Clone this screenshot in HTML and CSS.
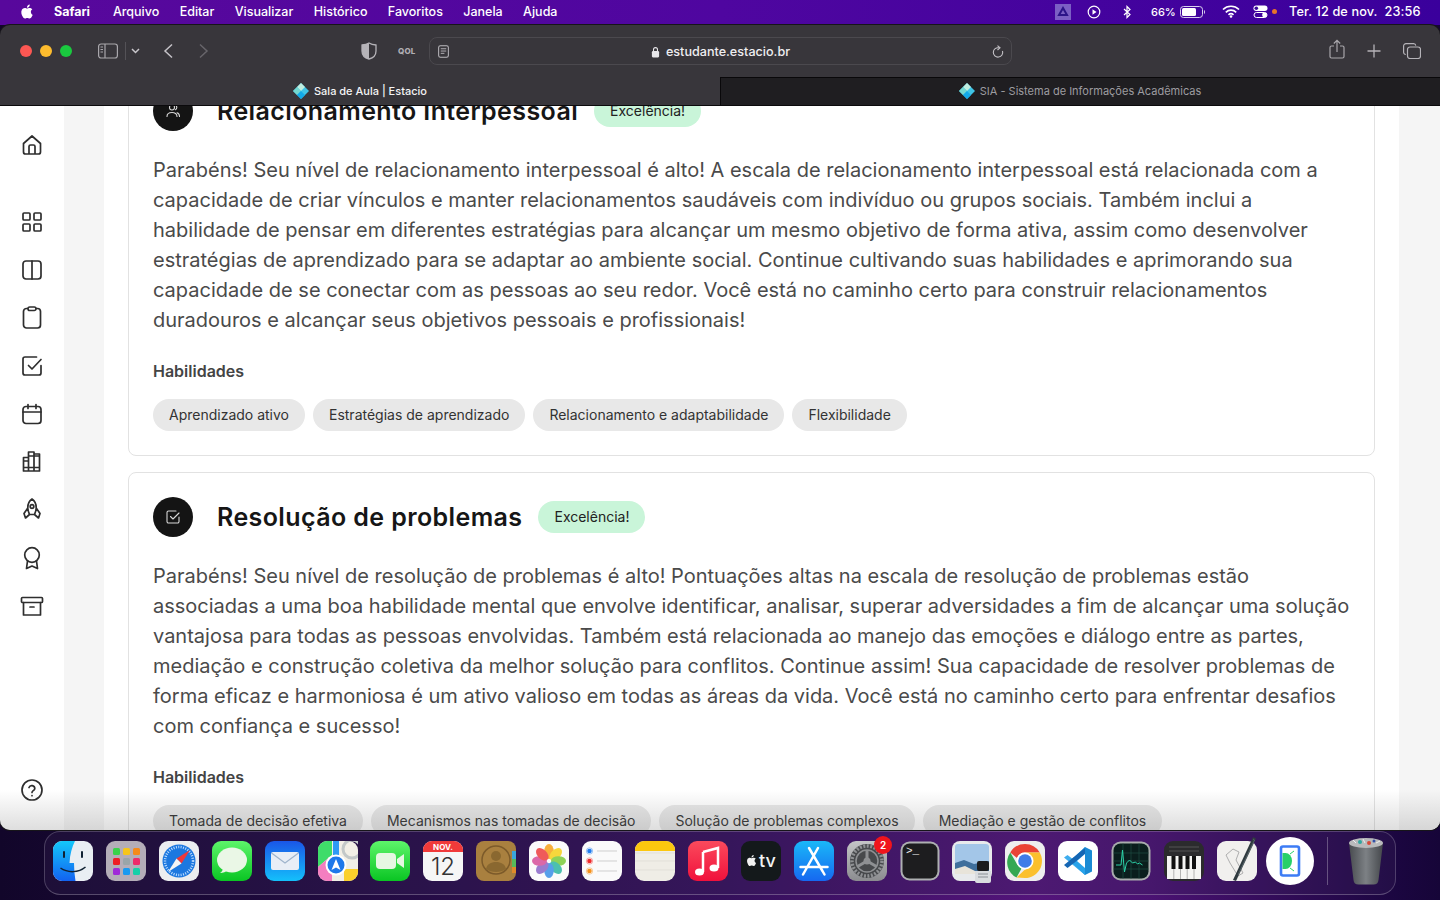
FILE: index.html
```html
<!DOCTYPE html>
<html lang="pt-BR">
<head>
<meta charset="utf-8">
<title>Sala de Aula | Estacio</title>
<link rel="stylesheet" href="styles.css">
</head>
<body>
<header class="menubar">
  <svg class="apple" viewBox="0 0 24 24"><path fill="#fff" d="M12.152 6.896c-.948 0-2.415-1.078-3.96-1.04-2.04.027-3.91 1.183-4.961 3.014-2.117 3.675-.546 9.103 1.519 12.09 1.013 1.454 2.208 3.09 3.792 3.039 1.52-.065 2.09-.987 3.935-.987 1.831 0 2.35.987 3.96.948 1.637-.026 2.676-1.48 3.676-2.948 1.156-1.688 1.636-3.325 1.662-3.415-.039-.013-3.182-1.221-3.22-4.857-.026-3.04 2.48-4.494 2.597-4.559-1.429-2.09-3.623-2.324-4.39-2.376-2-.156-3.675 1.09-4.61 1.09zM15.53 3.83c.843-1.012 1.4-2.427 1.245-3.83-1.207.052-2.662.805-3.532 1.818-.78.896-1.454 2.338-1.273 3.714 1.338.104 2.715-.688 3.559-1.701"/></svg>
  <nav class="menu">
    <span class="menu-app">Safari</span><span>Arquivo</span><span>Editar</span><span>Visualizar</span><span>Histórico</span><span>Favoritos</span><span>Janela</span><span>Ajuda</span>
  </nav>
  <div class="status">
    <svg class="st-drive" viewBox="0 0 16 16"><rect width="16" height="16" fill="#7b5fc4"/><path d="M8 4l4 7H4z" fill="none" stroke="#2c1488" stroke-width="2"/></svg>
    <svg class="st-play" viewBox="0 0 14 14"><circle cx="7" cy="7" r="5.8" fill="none" stroke="#fff" stroke-width="1.2"/><path d="M5.5 4.3l4 2.7-4 2.7z" fill="#fff"/></svg>
    <svg class="st-bt" viewBox="0 0 10 14"><path d="M2 4l6 5.5L5 12.5V1.5L8 4.5 2 10" fill="none" stroke="#fff" stroke-width="1.2"/></svg>
    <span class="st-pct">66%</span>
    <svg class="st-batt" viewBox="0 0 26 12"><rect x=".5" y=".5" width="22" height="11" rx="3" fill="none" stroke="#d8d0ee"/><rect x="2" y="2" width="14" height="8" rx="1.5" fill="#fff"/><path d="M24 4v4a2 2 0 0 0 1-2 2 2 0 0 0-1-2" fill="#d8d0ee"/></svg>
    <svg class="st-wifi" viewBox="0 0 18 13"><path d="M1 4.500a11.500 11.500 0 0 1 16 0M3.800 7.300a7.500 7.500 0 0 1 10.400 0M6.500 9.800a3.600 3.600 0 0 1 5 0" fill="none" stroke="#fff" stroke-width="1.7"/><circle cx="9" cy="11.5" r="1.3" fill="#fff"/></svg>
    <svg class="st-ctrl" viewBox="0 0 15 13"><rect x=".5" y=".5" width="14" height="5.5" rx="2.7" fill="#fff"/><circle cx="3.3" cy="3.2" r="1.8" fill="#3a0a9c"/><rect x="1" y="7.5" width="13" height="5" rx="2.5" fill="none" stroke="#fff"/><circle cx="11.5" cy="10" r="2.4" fill="#fff"/></svg>
    <i class="st-dot"></i>
    <span class="st-date">Ter. 12 de nov.&nbsp; 23:56</span>
  </div>
</header>

<div class="window">
  <div class="toolbar">
    <div class="lights"><i class="light red"></i><i class="light yellow"></i><i class="light green"></i></div>
    <svg class="tb tb-side" viewBox="0 0 20 16"><rect x=".6" y="1" width="18.8" height="14" rx="2.5" fill="none" stroke="#a9a7ac" stroke-width="1.2"/><path d="M7 1v14" stroke="#a9a7ac" stroke-width="1.2"/><path d="M2.5 4h2.500M2.500 6.500h2.500M2.500 9h2.500" stroke="#a9a7ac"/></svg>
    <i class="tb-sep"></i>
    <svg class="tb tb-chev" viewBox="0 0 9 6"><path d="M1 1l3.500 3.500L8 1" fill="none" stroke="#c9c7cc" stroke-width="1.5"/></svg>
    <svg class="tb tb-back" viewBox="0 0 11 16"><path d="M9 1.500L2 8l7 6.500" fill="none" stroke="#c4c2c7" stroke-width="1.5"/></svg>
    <svg class="tb tb-fwd" viewBox="0 0 11 16"><path d="M2 1.500L9 8l-7 6.500" fill="none" stroke="#67656a" stroke-width="1.5"/></svg>
    <svg class="tb tb-shield" viewBox="0 0 16 18"><path d="M8 1c2 1.200 4.500 1.800 7 2v6c0 4-3 7-7 8-4-1-7-4-7-8V3c2.500-.2 5-.8 7-2z" fill="none" stroke="#b5b3b8" stroke-width="1.3"/><path d="M8 1c-2 1.200-4.500 1.800-7 2v6c0 4 3 7 7 8z" fill="#b5b3b8"/></svg>
    <span class="tb-qol">QOL</span>
    <div class="urlbar">
      <svg class="url-reader" viewBox="0 0 12 14"><rect x=".7" y=".7" width="10.6" height="12.6" rx="2" fill="none" stroke="#bcbabf" stroke-width="1.1"/><path d="M3 4h6M3 6.500h6M3 9h4" stroke="#bcbabf"/></svg>
      <div class="url-text">
        <svg class="url-lock" viewBox="0 0 10 13"><rect x="1" y="5.5" width="8" height="7" rx="1.2" fill="#e8e7ea"/><path d="M2.800 6V3.800a2.200 2.200 0 0 1 4.400 0V6" fill="none" stroke="#e8e7ea" stroke-width="1.2"/></svg>
        <span>estudante.estacio.br</span>
      </div>
      <svg class="url-reload" viewBox="0 0 12 14"><path d="M7 2.800A4.700 4.700 0 1 0 10.500 6" fill="none" stroke="#c4c2c7" stroke-width="1.1"/><path d="M5.500.700L8 2.800 5.500 5" fill="none" stroke="#c4c2c7" stroke-width="1.1"/></svg>
    </div>
    <svg class="tb tb-share" viewBox="0 0 16 20"><path d="M5 7H2.500A1.500 1.500 0 0 0 1 8.500v9A1.500 1.500 0 0 0 2.500 19h11a1.500 1.500 0 0 0 1.500-1.500v-9A1.500 1.500 0 0 0 13.500 7H11M8 13V1.500M4.800 4.500L8 1.300l3.200 3.200" fill="none" stroke="#a9a7ac" stroke-width="1.2"/></svg>
    <svg class="tb tb-plus" viewBox="0 0 14 14"><path d="M7 .5v13M.5 7h13" stroke="#b5b3b8" stroke-width="1.3"/></svg>
    <svg class="tb tb-tabs" viewBox="0 0 18 16"><rect x="4.500" y="4" width="13" height="11.5" rx="2.5" fill="none" stroke="#b5b3b8" stroke-width="1.2"/><path d="M2.800 11.500A2.200 2.200 0 0 1 .6 9.300V3A2.400 2.400 0 0 1 3 .6h7.500a2.300 2.300 0 0 1 2.300 2" fill="none" stroke="#b5b3b8" stroke-width="1.2"/></svg>
  </div>
  <div class="tabs">
    <div class="tab tab-on">
      <svg class="favicon" viewBox="0 0 16 16"><path d="M8 0l8 8-8 8-8-8z" fill="#3fc4e6"/><path d="M8 0l4 4-4 4-4-4z" fill="#bfeee0"/><path d="M0 8l4-4 4 4-4 4z" fill="#74d8d0"/><path d="M8 8l4 4-4 4-4-4z" fill="#12a9e8"/></svg>
      <span>Sala de Aula | Estacio</span>
    </div>
    <div class="tab tab-off">
      <svg class="favicon" viewBox="0 0 16 16"><path d="M8 0l8 8-8 8-8-8z" fill="#3fc4e6"/><path d="M8 0l4 4-4 4-4-4z" fill="#bfeee0"/><path d="M0 8l4-4 4 4-4 4z" fill="#74d8d0"/><path d="M8 8l4 4-4 4-4-4z" fill="#12a9e8"/></svg>
      <span>SIA - Sistema de Informações Acadêmicas</span>
    </div>
  </div>
  <div class="page">
    <aside class="sidebar">
      <svg class="side-ic side-home" viewBox="0 0 24 24"><path d="M3.500 10.500L12 3l8.500 7.500V19a2 2 0 0 1-2 2h-13a2 2 0 0 1-2-2zM9 21v-7.500A1.500 1.500 0 0 1 10.500 12h3a1.500 1.500 0 0 1 1.500 1.500V21"/></svg>
      <svg class="side-ic" viewBox="0 0 24 24"><rect x="3" y="3" width="7" height="7" rx="1"/><rect x="14" y="3" width="7" height="7" rx="1"/><rect x="3" y="14" width="7" height="7" rx="1"/><rect x="14" y="14" width="7" height="7" rx="1"/></svg>
      <svg class="side-ic" viewBox="0 0 24 24"><rect x="3" y="3" width="18" height="18" rx="3"/><path d="M12 3v18"/></svg>
      <svg class="side-ic" viewBox="0 0 24 24"><rect x="3.500" y="2.500" width="17" height="19.5" rx="3"/><rect x="8" y="1" width="8" height="3.5" rx="1.7" class="fill-w"/></svg>
      <svg class="side-ic" viewBox="0 0 24 24"><path d="M21 11.500V19a2 2 0 0 1-2 2H5a2 2 0 0 1-2-2V5a2 2 0 0 1 2-2h11.500M8.500 11.500l3.500 3.500 9-9.500"/></svg>
      <svg class="side-ic" viewBox="0 0 24 24"><rect x="3" y="4.500" width="18" height="17" rx="3"/><path d="M3 10h18M8 2.500v4M16 2.500v4"/></svg>
      <svg class="side-ic" viewBox="0 0 24 24"><path d="M3.500 7.500h5V21h-5zM8.500 2h5.500v19H8.500zM14 4h5.500v17H14zM3.500 17.500h16M8.500 6h11M3.500 11h5"/></svg>
      <svg class="side-ic" viewBox="0 0 24 24"><path d="M12 1c2.800 2 4.200 5 4.200 8.500 0 2.700-.7 5-1.700 7h-5c-1-2-1.700-4.300-1.700-7C7.800 6 9.200 3 12 1zM7.800 10L4 15.500 5.500 20l4-3.500M16.200 10l3.800 5.500-1.500 4.500-4-3.500"/><circle cx="12" cy="8.500" r="1.800"/></svg>
      <svg class="side-ic" viewBox="0 0 24 24"><circle cx="12" cy="9" r="7.300"/><path d="M7.500 15l-1 7.500L12 20l5.500 2.500-1-7.500"/></svg>
      <svg class="side-ic" viewBox="0 0 24 24"><rect x="1.500" y="3.500" width="21" height="5" rx="1"/><path d="M3.500 8.500V21h17V8.500M10 13h4"/></svg>
      <svg class="side-ic side-help" viewBox="0 0 24 24"><circle cx="12" cy="12" r="10"/><path d="M9 9.500a3 3 0 0 1 5.800 1c0 2-2.800 2.300-2.800 3.900M12 17.500v.2"/></svg>
    </aside>
    <div class="gutter"></div>
    <main class="main">
      <section class="card card-first">
        <div class="card-head">
          <span class="avatar">
            <svg viewBox="0 0 16 16"><circle cx="7" cy="4.500" r="2.500"/><path d="M2 13.500c0-2.800 2.200-4 5-4s5 1.200 5 4M10.500 2.300a2.500 2.500 0 0 1 0 4.400M12 9.800c1.500.5 2.500 1.700 2.500 3.700"/></svg>
          </span>
          <h2 class="card-title">Relacionamento Interpessoal</h2>
          <span class="badge">Excelência!</span>
        </div>
        <p class="card-text">Parabéns! Seu nível de relacionamento interpessoal é alto! A escala de relacionamento interpessoal está relacionada com a capacidade de criar vínculos e manter relacionamentos saudáveis com indivíduo ou grupos sociais. Também inclui a habilidade de pensar em diferentes estratégias para alcançar um mesmo objetivo de forma ativa, assim como desenvolver estratégias de aprendizado para se adaptar ao ambiente social. Continue cultivando suas habilidades e aprimorando sua capacidade de se conectar com as pessoas ao seu redor. Você está no caminho certo para construir relacionamentos duradouros e alcançar seus objetivos pessoais e profissionais!</p>
        <h3 class="skills-title">Habilidades</h3>
        <div class="chips"><span class="chip">Aprendizado ativo</span><span class="chip">Estratégias de aprendizado</span><span class="chip">Relacionamento e adaptabilidade</span><span class="chip">Flexibilidade</span></div>
      </section>
      <section class="card">
        <div class="card-head">
          <span class="avatar">
            <svg viewBox="0 0 16 16"><path d="M14 8v4.500a1.500 1.500 0 0 1-1.500 1.500h-9A1.500 1.500 0 0 1 2 12.500v-9A1.500 1.500 0 0 1 3.500 2H11M5.500 7.500L8 10l6-6"/></svg>
          </span>
          <h2 class="card-title">Resolução de problemas</h2>
          <span class="badge">Excelência!</span>
        </div>
        <p class="card-text">Parabéns! Seu nível de resolução de problemas é alto! Pontuações altas na escala de resolução de problemas estão associadas a uma boa habilidade mental que envolve identificar, analisar, superar adversidades a fim de alcançar uma solução vantajosa para todas as pessoas envolvidas. Também está relacionada ao manejo das emoções e diálogo entre as partes, mediação e construção coletiva da melhor solução para conflitos. Continue assim! Sua capacidade de resolver problemas de forma eficaz e harmoniosa é um ativo valioso em todas as áreas da vida. Você está no caminho certo para enfrentar desafios com confiança e sucesso!</p>
        <h3 class="skills-title">Habilidades</h3>
        <div class="chips"><span class="chip">Tomada de decisão efetiva</span><span class="chip">Mecanismos nas tomadas de decisão</span><span class="chip">Solução de problemas complexos</span><span class="chip">Mediação e gestão de conflitos</span></div>
      </section>
    </main>
    <div class="gutter-r"></div>
    <div class="page-fade"></div>
  </div>
</div>

<footer class="dock">
  <svg class="app" viewBox="0 0 40 40"><defs><linearGradient id="fa" x1="0" y1="0" x2="0" y2="1"><stop offset="0" stop-color="#14c8fb"/><stop offset="1" stop-color="#1262f0"/></linearGradient></defs><rect width="40" height="40" rx="9" fill="#e9eef3"/><path d="M9 0h13c-3 6-5 13-5.500 22H21c0 6 .5 12 1.500 18H9a9 9 0 0 1-9-9V9a9 9 0 0 1 9-9z" fill="url(#fa)"/><path d="M11 11v5M29 11v5" stroke="#123" stroke-width="2" stroke-linecap="round"/><path d="M7.500 27c7 5 18 5 25-1" fill="none" stroke="#123" stroke-width="1.5"/></svg>
  <svg class="app" viewBox="0 0 40 40"><rect width="40" height="40" rx="9" fill="#b4adb8"/><g><rect x="7" y="7" width="7" height="7" rx="1.5" fill="#39d24a"/><rect x="17" y="7" width="7" height="7" rx="1.5" fill="#f7c51b"/><rect x="27" y="7" width="7" height="7" rx="1.5" fill="#f58a1a"/><rect x="7" y="17" width="7" height="7" rx="1.5" fill="#ee1c25"/><rect x="17" y="17" width="7" height="7" rx="1.5" fill="#9aa5a9"/><rect x="27" y="17" width="7" height="7" rx="1.5" fill="#ee2a6a"/><rect x="7" y="27" width="7" height="7" rx="1.5" fill="#a02ad8"/><rect x="17" y="27" width="7" height="7" rx="1.5" fill="#1a9af0"/><rect x="27" y="27" width="7" height="7" rx="1.5" fill="#16cfa8"/></g></svg>
  <svg class="app" viewBox="0 0 40 40"><rect width="40" height="40" rx="9" fill="#eceef0"/><circle cx="20" cy="20" r="16.5" fill="#1c78e0"/><circle cx="20" cy="20" r="14" fill="none" stroke="#bcdcff" stroke-width="2.5" stroke-dasharray="1 1.4"/><path d="M31 9L17.500 17.500 22.500 22.500z" fill="#f0383a"/><path d="M9 31L17.500 17.500 22.500 22.500z" fill="#f4f4f4"/></svg>
  <svg class="app" viewBox="0 0 40 40"><defs><linearGradient id="ms" x1="0" y1="0" x2="0" y2="1"><stop offset="0" stop-color="#5df56a"/><stop offset="1" stop-color="#0ac523"/></linearGradient></defs><rect width="40" height="40" rx="9" fill="url(#ms)"/><ellipse cx="20" cy="19" rx="15" ry="12.5" fill="#eaf7e6"/><path d="M11 26c0 3-1 5-3 6 3 0 6-1 8-3z" fill="#eaf7e6"/></svg>
  <svg class="app" viewBox="0 0 40 40"><defs><linearGradient id="ml" x1="0" y1="0" x2="0" y2="1"><stop offset="0" stop-color="#1a56e8"/><stop offset="1" stop-color="#14c0fb"/></linearGradient></defs><rect width="40" height="40" rx="9" fill="url(#ml)"/><rect x="6" y="11" width="28" height="18" rx="2" fill="#e8eef6"/><path d="M6.500 12L20 22l13.500-10" fill="none" stroke="#9fb4cc" stroke-width="1.2"/></svg>
  <svg class="app" viewBox="0 0 40 40"><rect width="40" height="40" rx="9" fill="#f2efe6"/><path d="M0 9a9 9 0 0 1 9-9h5v14L0 26z" fill="#3fdc6a"/><path d="M0 26l14-12v26H9a9 9 0 0 1-9-9z" fill="#f47ec0"/><path d="M26 28h14v3a9 9 0 0 1-9 9h-5z" fill="#fbd02b"/><circle cx="34" cy="8" r="9" fill="none" stroke="#c3c8c8" stroke-width="3"/><path d="M15 0h6v16h-6z" fill="#2f9af5"/><circle cx="18" cy="24" r="10.5" fill="#fff"/><circle cx="18" cy="24" r="8.5" fill="#1f78ea"/><path d="M18 18l4.500 11-4.500-2.500L13.500 29z" fill="#fff"/></svg>
  <svg class="app" viewBox="0 0 40 40"><defs><linearGradient id="ft" x1="0" y1="0" x2="0" y2="1"><stop offset="0" stop-color="#5df56a"/><stop offset="1" stop-color="#0ac523"/></linearGradient></defs><rect width="40" height="40" rx="9" fill="url(#ft)"/><rect x="6" y="12" width="20" height="16" rx="4" fill="#e5f7e2"/><path d="M27 18l7-5v14l-7-5z" fill="#e5f7e2"/></svg>
  <svg class="app" viewBox="0 0 40 40"><rect width="40" height="40" rx="9" fill="#f6f6f6"/><path d="M0 11V9a9 9 0 0 1 9-9h22a9 9 0 0 1 9 9v2z" fill="#f13a3a"/><text x="20" y="9" class="cal-m">NOV.</text><text x="20" y="34" class="cal-d">12</text></svg>
  <svg class="app" viewBox="0 0 40 40"><rect width="40" height="40" rx="8" fill="#a9803f"/><rect x="36" y="10" width="4" height="8" fill="#3aa6dc"/><rect x="36" y="18" width="4" height="8" fill="#58b95a"/><rect x="36" y="26" width="4" height="6" fill="#e08a2a"/><circle cx="20" cy="19" r="14" fill="none" stroke="#7c5a2a" stroke-width="1.5"/><circle cx="20" cy="15" r="5" fill="#8a6830"/><path d="M10 28c1-5 5-7 10-7s9 2 10 7c-5 4-15 4-20 0z" fill="#8a6830"/></svg>
  <svg class="app" viewBox="0 0 40 40"><rect width="40" height="40" rx="9" fill="#fbfbfb"/><g opacity=".85"><ellipse cx="20" cy="10.500" rx="4.800" ry="7.500" fill="#f7a21b"/><ellipse cx="20" cy="10.500" rx="4.800" ry="7.500" fill="#f7d11b" transform="rotate(45 20 20)"/><ellipse cx="20" cy="10.500" rx="4.800" ry="7.500" fill="#7ccb3c" transform="rotate(90 20 20)"/><ellipse cx="20" cy="10.500" rx="4.800" ry="7.500" fill="#2eb6a2" transform="rotate(135 20 20)"/><ellipse cx="20" cy="10.500" rx="4.800" ry="7.500" fill="#3a8fe8" transform="rotate(180 20 20)"/><ellipse cx="20" cy="10.500" rx="4.800" ry="7.500" fill="#8a66c8" transform="rotate(225 20 20)"/><ellipse cx="20" cy="10.500" rx="4.800" ry="7.500" fill="#d64f9a" transform="rotate(270 20 20)"/><ellipse cx="20" cy="10.500" rx="4.800" ry="7.500" fill="#ee3f3f" transform="rotate(315 20 20)"/></g></svg>
  <svg class="app" viewBox="0 0 40 40"><rect width="40" height="40" rx="9" fill="#fafafa"/><circle cx="7.500" cy="10" r="3.200" fill="none" stroke="#9cc4f6"/><circle cx="7.500" cy="10" r="2.300" fill="#1f7cf0"/><circle cx="7.500" cy="20" r="3.200" fill="none" stroke="#f6a8a8"/><circle cx="7.500" cy="20" r="2.300" fill="#f0282a"/><circle cx="7.500" cy="30" r="3.200" fill="none" stroke="#f8cc9a"/><circle cx="7.500" cy="30" r="2.300" fill="#f7911a"/><path d="M15 10h20M15 20h20M15 30h20" stroke="#cfcfcf" stroke-width="1"/></svg>
  <svg class="app" viewBox="0 0 40 40"><rect width="40" height="40" rx="9" fill="#efede6"/><path d="M0 10V9a9 9 0 0 1 9-9h22a9 9 0 0 1 9 9v1z" fill="#fcc70f"/><path d="M0 12h40M0 20h40M0 29h40" stroke="#dedbd2" stroke-width=".7"/></svg>
  <svg class="app" viewBox="0 0 40 40"><defs><linearGradient id="mu" x1="0" y1="0" x2="0" y2="1"><stop offset="0" stop-color="#fb4a5c"/><stop offset="1" stop-color="#f0113c"/></linearGradient></defs><rect width="40" height="40" rx="9" fill="url(#mu)"/><path d="M15 11l15-4v20" fill="none" stroke="#fff" stroke-width="2.5"/><path d="M15 11v20" stroke="#fff" stroke-width="2.5"/><ellipse cx="11.500" cy="31" rx="4.500" ry="3.500" fill="#fff"/><ellipse cx="26" cy="27" rx="4.500" ry="3.500" fill="#fff"/></svg>
  <svg class="app" viewBox="0 0 40 40"><rect width="40" height="40" rx="9" fill="#14191b"/><g transform="translate(5 14) scale(.46)"><path fill="#f2f2f2" d="M12.152 6.896c-.948 0-2.415-1.078-3.96-1.04-2.04.027-3.91 1.183-4.961 3.014-2.117 3.675-.546 9.103 1.519 12.09 1.013 1.454 2.208 3.09 3.792 3.039 1.52-.065 2.09-.987 3.935-.987 1.831 0 2.35.987 3.96.948 1.637-.026 2.676-1.48 3.676-2.948 1.156-1.688 1.636-3.325 1.662-3.415-.039-.013-3.182-1.221-3.22-4.857-.026-3.04 2.48-4.494 2.597-4.559-1.429-2.09-3.623-2.324-4.39-2.376-2-.156-3.675 1.09-4.61 1.09zM15.53 3.83c.843-1.012 1.4-2.427 1.245-3.83-1.207.052-2.662.805-3.532 1.818-.78.896-1.454 2.338-1.273 3.714 1.338.104 2.715-.688 3.559-1.701"/></g><text x="18" y="26" class="tv-t">tv</text></svg>
  <svg class="app" viewBox="0 0 40 40"><defs><linearGradient id="as" x1="0" y1="0" x2="0" y2="1"><stop offset="0" stop-color="#1ab8f8"/><stop offset="1" stop-color="#1668f0"/></linearGradient></defs><rect width="40" height="40" rx="9" fill="url(#as)"/><path d="M15 7l13.500 23M24 7L11 30M6.500 26h27M11 30l-2 3.500M28.500 30l2 3.500" stroke="#fff" stroke-width="2.5" stroke-linecap="round" fill="none"/></svg>
  <svg class="app" viewBox="0 0 40 40"><defs><linearGradient id="sg" x1="0" y1="0" x2="0" y2="1"><stop offset="0" stop-color="#c4c5c7"/><stop offset="1" stop-color="#8b8c8f"/></linearGradient></defs><rect width="40" height="40" rx="9" fill="url(#sg)"/><circle cx="20" cy="20" r="17" fill="#47494c"/><circle cx="20" cy="20" r="15" fill="none" stroke="#8e9093" stroke-width="3.5" stroke-dasharray="2 1.5"/><circle cx="20" cy="20" r="11" fill="none" stroke="#8e9093" stroke-width="1.5"/><path d="M20 20V9M20 20l9.500 5.500M20 20l-9.500 5.500" stroke="#8e9093" stroke-width="3"/><circle cx="20" cy="20" r="3.500" fill="#8e9093"/></svg>
  <svg class="app" viewBox="0 0 40 40"><rect x=".5" y=".5" width="39" height="39" rx="9" fill="#aeb0b2"/><rect x="2.500" y="2.500" width="35" height="35" rx="7" fill="#1d1d1f"/><text x="6" y="13" class="term">&gt;_</text></svg>
  <svg class="app app-over" viewBox="0 0 40 40"><rect width="40" height="40" rx="8" fill="#e8eaec"/><rect x="3" y="3" width="34" height="30" rx="3" fill="#a3c6e8"/><path d="M3 22l9-3 10 4 15-3v13H3z" fill="#3f6f9c"/><path d="M3 28l10-3 10 5v3H3z" fill="#e8e4da"/><path d="M23 30h16v10a2 2 0 0 1-2 2H25a2 2 0 0 1-2-2z" fill="#d9dcdf"/><path d="M26 33l10 0M26 36h10" stroke="#8a9096"/><rect x="25" y="20" width="12" height="10" rx="2" fill="#1b1b1d"/></svg>
  <svg class="app" viewBox="0 0 40 40"><rect width="40" height="40" rx="9" fill="#eeeeee"/><path d="M20 3A17 17 0 0 1 34.700 11.500H20a8.500 8.500 0 0 0-8 5.500L5.300 11.500A17 17 0 0 1 20 3z" fill="#ea4335"/><path d="M5.300 11.500L12.500 24l4 3.500-5 9A17 17 0 0 1 5.300 11.500z" fill="#34a853"/><path d="M34.700 11.500A17 17 0 0 1 20 37l-8.500-.5 8.500-8a8.500 8.500 0 0 0 7-8.500 8.500 8.500 0 0 0-7-8.500z" fill="#fbc02d"/><circle cx="20" cy="20" r="8.500" fill="#fff"/><circle cx="20" cy="20" r="6.800" fill="#3f7ce8"/></svg>
  <svg class="app" viewBox="0 0 40 40"><rect width="40" height="40" rx="9" fill="#fff"/><path d="M27 6l7 3.500v21L27 34 12 20z" fill="#1a8ad4"/><path d="M27 6v28L6 16.500 9.500 14l6.500 5z" fill="#2aa4ec" opacity=".9"/><path d="M27 13L16 22l-6.500 5L6 24l21-17z" fill="#1566b4"/><path d="M27 13v14l-8-7z" fill="#fff"/></svg>
  <svg class="app" viewBox="0 0 40 40"><rect x=".5" y=".5" width="39" height="39" rx="9" fill="#a9acad"/><rect x="2.500" y="2.500" width="35" height="35" rx="7" fill="#0a1e1d"/><path d="M2.500 12h35M2.500 20h35M2.500 28h35M12 2.500v35M20 2.500v35M28 2.500v35" stroke="#1d4a44" stroke-width=".7"/><path d="M5 24h5l1.500-15 2 22 2-9 3-3 3 3 3-1 2 2 2-1 3 2" fill="none" stroke="#2cd2a8" stroke-width="1"/></svg>
  <svg class="app" viewBox="0 0 40 40"><rect width="40" height="40" rx="9" fill="#2b2b2d"/><rect x="3" y="15" width="34" height="23" fill="#f5f5f3"/><path d="M9.800 15v23M16.500 15v23M23.200 15v23M30 15v23" stroke="#888" stroke-width=".6"/><path d="M7.500 15h4v13h-4zM14.500 15h4v13h-4zM21.500 15h4v13h-4zM28 15h4v13h-4z" fill="#111"/><path d="M5 6h30M5 10h30" stroke="#555" stroke-width="1"/></svg>
  <svg class="app app-over" viewBox="0 0 40 40"><rect width="40" height="40" rx="9" fill="#f1f0ee"/><path d="M9 14l7-6 6 3-3 8 7 13-5 3-8-13z" fill="none" stroke="#aeaeae" stroke-width="1"/><path d="M36 -4l3 1.500L19 40l-3-1z" fill="#2f3a3f"/><path d="M36 -2l1.500 1L21 34" stroke="#6d7a80" stroke-width=".6" fill="none"/></svg>
  <svg class="app app-android" viewBox="0 0 48 48"><circle cx="24" cy="24" r="24" fill="#fff"/><rect x="15" y="9.500" width="18" height="29" rx="2" fill="#fff" stroke="#3d7cf5" stroke-width="2.6"/><path d="M16.500 16h3a6.500 8 0 0 1 6.500 8 6.500 8 0 0 1-6.500 8h-3z" fill="#28d068"/><path d="M24 17l4-3M24 31l4 3" stroke="#28d068" stroke-width="1"/></svg>
  <i class="dock-sep"></i>
  <svg class="trash" viewBox="0 0 36 48"><defs><linearGradient id="tr" x1="0" y1="0" x2="1" y2="0"><stop offset="0" stop-color="#484b4f"/><stop offset=".5" stop-color="#7d8185"/><stop offset="1" stop-color="#44474b"/></linearGradient></defs><path d="M1 6h34l-4.500 37a5 5 0 0 1-5 4.500h-15a5 5 0 0 1-5-4.500z" fill="url(#tr)"/><ellipse cx="18" cy="6" rx="17" ry="5" fill="#b9babc"/><circle cx="12" cy="5" r="2" fill="#2fa6a0"/><circle cx="21" cy="6" r="2" fill="#d8483a"/><circle cx="26" cy="4" r="1.5" fill="#3350a8"/><path d="M5 3l3 3M15 2l2 4M28 6l4-2" stroke="#eee"/></svg>
  <span class="calendar-badge">2</span>
</footer>
</body>
</html>
```

FILE: styles.css
```css
* { box-sizing: border-box; }
html, body { margin: 0; height: 100%; }
body {
  width: 1440px;
  height: 900px;
  overflow: hidden;
  position: relative;
  display: flex;
  flex-direction: column;
  font-family: "Inter", "Liberation Sans", sans-serif;
  background: linear-gradient(90deg, #12062a 0%, #1e0a3c 20%, #34105a 50%, #53147a 72%, #4a1272 80%, #1b0640 97%, #160538 100%);
}

/* menu bar */
.menubar {
  height: 25px;
  flex: none;
  display: flex;
  align-items: center;
  padding-left: 20px;
  color: #fff;
  font-size: 12.5px;
  font-weight: 500;
  background: linear-gradient(90deg, #58089c 0%, #4f06a0 50%, #3a009c 100%);
}
.apple { width: 14px; height: 15px; margin-top: -2px; }
.menu { display: flex; gap: 20.4px; margin-left: 20px; margin-top: -2px; }
.menu-app { font-weight: 700; margin-right: 2.5px; }
.status { display: flex; align-items: center; position: absolute; left: 1055px; top: 0; height: 23px; }
.st-drive { width: 16px; height: 16px; }
.st-play { width: 14px; height: 14px; margin-left: 16px; }
.st-bt { width: 10px; height: 14px; margin-left: 21px; }
.st-pct { margin-left: 19px; font-size: 11px; width: 24px; }
.st-batt { width: 26px; height: 12px; margin-left: 5px; }
.st-wifi { width: 18px; height: 13px; margin-left: 16px; }
.st-ctrl { width: 15px; height: 13px; margin-left: 13px; }
.st-dot { width: 5px; height: 5px; border-radius: 50%; background: #e8732a; margin-left: 4px; }
.st-date { margin-left: 12px; font-size: 12.7px; white-space: nowrap; letter-spacing: .12px; }

/* browser window */
.window {
  height: 805px;
  flex: none;
  display: flex;
  flex-direction: column;
  border-radius: 10px;
  overflow: hidden;
  background: #38363b;
  box-shadow: 0 0 0 1px #17151a;
  position: relative;
}
.toolbar { height: 52px; flex: none; display: flex; align-items: center; padding-left: 20px; padding-bottom: 1px; }
.lights { display: flex; gap: 8px; }
.light { width: 12px; height: 12px; border-radius: 50%; }
.red { background: #fc5753; }
.yellow { background: #fdbc2e; }
.green { background: #1ac93f; }
.tb { flex: none; display: block; }
.tb-side { width: 20px; height: 16px; margin-left: 26px; }
.tb-sep { width: 1px; height: 18px; background: #545257; margin-left: 7px; }
.tb-chev { width: 9px; height: 6px; margin-left: 5px; }
.tb-back { width: 11px; height: 16px; margin-left: 23px; }
.tb-fwd { width: 11px; height: 16px; margin-left: 24px; }
.tb-shield { width: 16px; height: 18px; margin-left: 152px; }
.tb-qol { width: 18px; margin-left: 21px; margin-right: 13px; font-size: 8px; font-weight: 800; color: #b0aeb3; letter-spacing: .2px; white-space: nowrap; }
.urlbar {
  width: 583px; height: 28px; flex: none;
  display: flex; align-items: center; justify-content: space-between;
  padding: 1px 7px 0 8px;
  margin-top: 1px;
  border: 1px solid #4b494e; border-radius: 8px;
  color: #efeef1; font-size: 12.6px; font-weight: 500;
}
.url-reader { width: 11px; height: 13px; }
.url-text { display: flex; align-items: center; gap: 6px; }
.url-lock { width: 9px; height: 12px; }
.url-reload { width: 12px; height: 14px; }
.tb-share { width: 16px; height: 20px; margin-left: 317px; margin-top: -3px; }
.tb-plus { width: 14px; height: 14px; margin-left: 22px; }
.tb-tabs { width: 18px; height: 16px; margin-left: 22px; }

.tabs { height: 29px; flex: none; display: flex; border-bottom: 1px solid #0b0a0c; }
.tab { width: 720px; display: flex; align-items: center; justify-content: center; gap: 5px; font-size: 11px; font-weight: 500; }
.tab-on { color: #f4f4f5; }
.tab-off { color: #9d9ca0; background: #1f1e21; box-shadow: inset 0 1px 0 #09080a, inset 1px 0 0 #09080a; font-weight: 400; }
.favicon { width: 16px; height: 16px; }

/* page */
.page { flex: 1; min-height: 0; display: flex; position: relative; background: #fff; }
.sidebar { width: 64px; flex: none; display: flex; flex-direction: column; align-items: center; gap: 24px; padding: 27px 0 28px; }
.side-ic { width: 24px; height: 24px; flex: none; fill: none; stroke: #2e2e2e; stroke-width: 1.7; stroke-linejoin: round; stroke-linecap: round; }
.side-ic .fill-w { fill: #fff; }
.side-home { margin-bottom: 29px; }
.side-help { margin-top: auto; }
.gutter { width: 40px; flex: none; background: #f5f5f5; }
.gutter-r { flex: 1; background: #f5f5f5; }
.main { width: 1295px; flex: none; padding: 0 24px; display: flex; flex-direction: column; gap: 16px; overflow: hidden; }
.card { flex: none; border: 1px solid #e2e2e2; border-radius: 8px; padding: 24px; background: #fff; }
.card-first { margin-top: -40px; }
.card-head { display: flex; align-items: center; height: 40px; margin-bottom: 24px; }
.avatar { width: 40px; height: 40px; border-radius: 50%; background: #141414; display: flex; align-items: center; justify-content: center; flex: none; }
.avatar svg { width: 16px; height: 16px; fill: none; stroke: #d8d8d8; stroke-width: 1.1; stroke-linecap: round; stroke-linejoin: round; }
.card-title { margin: 0 16px 0 24px; font-size: 25px; line-height: 32px; font-weight: 600; color: #161616; letter-spacing: .4px; white-space: nowrap; }
.badge { height: 32px; padding: 0 16px 1px; border-radius: 16px; background: #c9f5d9; color: #222; font-size: 14px; display: flex; align-items: center; }
.card-text { margin: 0; font-size: 20px; line-height: 30px; color: #4a4a4a; }
.skills-title { margin: 24px 0 16px; font-size: 16px; line-height: 24px; font-weight: 600; color: #444; }
.chips { display: flex; gap: 8px; }
.chip { height: 32px; padding: 0 16px 1px; border-radius: 16px; background: #e8e8e8; color: #333; font-size: 14px; display: flex; align-items: center; white-space: nowrap; }
.page-fade { position: absolute; left: 0; right: 0; bottom: 0; height: 40px; background: linear-gradient(180deg, rgba(90,90,90,0), rgba(90,90,90,.2)); pointer-events: none; }

/* dock */
.dock {
  width: 1352px; height: 64px; margin: 1px 0 0 44px; flex: none;
  display: flex; align-items: center; gap: 12.92px;
  padding: 0 0 4px 8px;
  border: 1px solid rgba(255,255,255,.2); border-bottom-color: rgba(255,255,255,.25);
  border-radius: 16px;
  background: rgba(60,40,90,.25);
  position: relative;
}
.app { width: 40px; height: 40px; flex: none; display: block; }
.app-over { overflow: visible; }
.app-android { width: 48px; height: 48px; margin-left: -3.5px; }
.dock-sep { width: 1px; height: 48px; background: rgba(255,255,255,.28); flex: none; }
.trash { width: 36px; height: 48px; flex: none; margin-left: 7px; }
.calendar-badge { position: absolute; left: 829px; top: 4px; width: 18px; height: 18px; border-radius: 50%; background: #f0141c; color: #fff; font-size: 10px; font-weight: 600; display: flex; align-items: center; justify-content: center; }
.cal-m { font-family: "Inter", sans-serif; font-size: 8px; font-weight: 700; fill: #fff; text-anchor: middle; }
.cal-d { font-family: "Inter", sans-serif; font-size: 24px; font-weight: 300; fill: #333; text-anchor: middle; }
.tv-t { font-family: "Inter", sans-serif; font-size: 18px; font-weight: 500; fill: #f2f2f2; }
.term { font-family: "Liberation Mono", monospace; font-size: 11px; fill: #f0f0f0; }
```
